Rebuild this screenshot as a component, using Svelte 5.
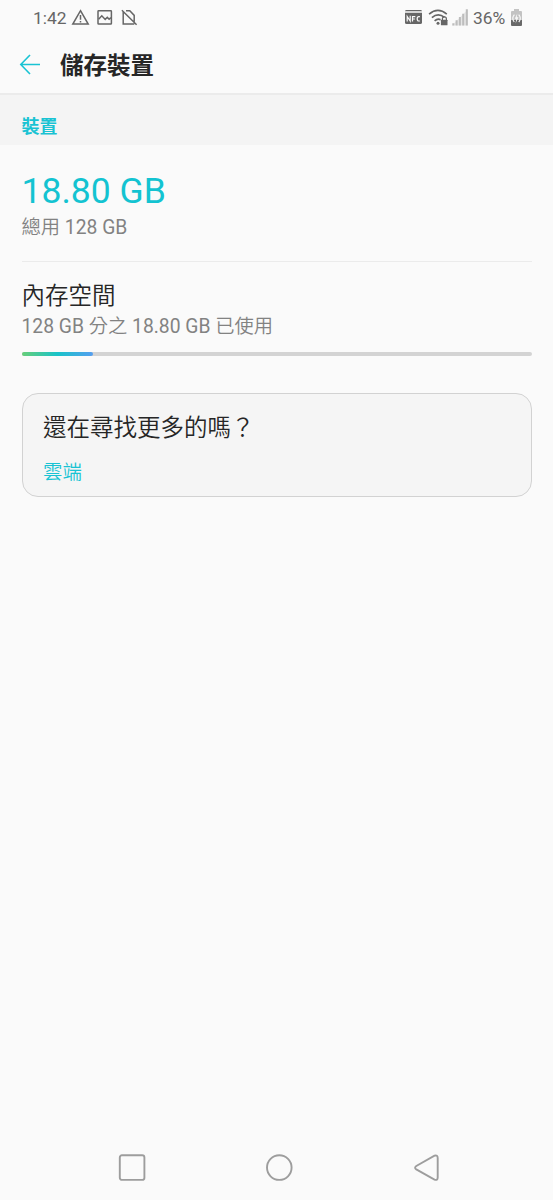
<script>
  const total = 128;
  const used = 18.8;
  // share of the meter that is filled, in percent
  const share = (used / total) * 100 - 0.6;
</script>

<div class="screen">
  <div class="status">
    <span class="time">1:42</span>
    <svg class="left-icons" viewBox="70 6 70 24" width="70" height="24" fill="none" stroke="#666" stroke-width="1.5">
      <path d="M80.5 10.7 88.2 24H72.8Z" />
      <path d="M80.5 15v4.7M80.5 20.9v1.5" />
      <rect x="98" y="10.8" width="13.4" height="13.2" rx="0.6" />
      <path d="M98.6 19.2 101.8 15.8 105.2 19.4 107.3 17.3 109.1 19.3 110.9 17.6" />
      <path d="M121.9 10.3 136.6 24.8M123.2 12v12H134.3M126 10.8h3.8l4.4 4.6v6.4" />
    </svg>
    <svg class="right-icons" viewBox="403 6 66 24" width="66" height="24">
      <path d="M406.5 10h14a1.5 1.5 0 0 1 1.5 1.3H405a1.5 1.5 0 0 1 1.5-1.3Z" fill="#666" />
      <path d="M405 12.8h17v9.6a1.6 1.6 0 0 1-1.6 1.6h-13.8a1.6 1.6 0 0 1-1.6-1.6Z" fill="#666" />
      <path d="M407.2 21.6v-5.2l3 4.6v-5.2M412.5 21.6v-5h2.8M412.5 19h2.4M419.9 16.6h-1.2q-1.5 0-1.5 2.2t1.5 2.2h1.2" fill="none" stroke="#fafafa" stroke-width="1.2" />
      <g fill="none" stroke="#666" stroke-width="1.7">
        <path d="M429.1 14.1Q437.9 6.8 446.8 14.1" />
        <path d="M431.9 17.6Q438 12.3 444.5 17.3" />
        <path d="M434.6 20.8Q437.8 17.9 440.5 19.7" />
        <path d="M442.4 20v-1.1a2 2 0 0 1 4 0V20" stroke-width="1.2" />
      </g>
      <circle cx="438" cy="23.2" r="1.5" fill="#666" />
      <rect x="440.9" y="19.7" width="6.6" height="5.6" rx="0.6" fill="#666" />
      <path d="M452 25.4 468 9.2V25.4Z" fill="#e6e6e6" />
      <path d="M453.3 23.2v2.2M456.6 20.2v5.2M459.9 17v8.4M463.2 13.7v11.7M466.8 9.2v16.2" stroke="#bdbdbd" stroke-width="2" />
    </svg>
    <span class="percent">36%</span>
    <svg class="battery" viewBox="510 7.6 13 21" width="13" height="21">
      <path d="M514 8.5h5v2h2q1 0 1 1v8h-11v-8q0-1 1-1h2Z" fill="#c3c3c3" />
      <path d="M511 19.5h11v5q0 1-1 1h-9q-1 0-1-1Z" fill="#686868" />
      <path d="M514.4 14.2Q511.2 17.8 514.2 21.6M518.7 14.2Q521.9 17.8 518.8 21.6" fill="none" stroke="#fafafa" stroke-width="1.2" />
      <path d="M517.3 13 514.8 18.4h1.5l-.7 4.8 2.8-6.4h-1.7Z" fill="#fafafa" />
    </svg>
  </div>

  <header>
    <svg viewBox="0 0 22 22" width="22" height="22" fill="none" stroke="#19c3d3" stroke-width="1.6">
      <path d="M11 1 1.8 10.5 11 20M1.8 10.5H21" />
    </svg>
    <h1>儲存裝置</h1>
  </header>

  <h2>裝置</h2>

  <main>
    <section class="summary">
      <div class="amount">18.80 GB</div>
      <div class="sub">總用 128 GB</div>
    </section>

    <section class="internal">
      <div class="label">內存空間</div>
      <div class="sub">128 GB 分之 18.80 GB 已使用</div>
      <div class="meter"><div class="fill" style="width: {share}%"></div></div>
    </section>

    <section class="card">
      <div class="question">還在尋找更多的嗎？</div>
      <div class="link">雲端</div>
    </section>
  </main>

  <nav>
    <svg viewBox="0 0 28 28" width="28" height="28"><rect x="1.8" y="1.3" width="24.6" height="24.6" rx="2.2" /></svg>
    <svg viewBox="0 0 28 28" width="28" height="28"><circle cx="13.3" cy="13.6" r="12.3" /></svg>
    <svg viewBox="0 0 28 28" width="28" height="28"><path d="M3.3 12 21.5 1.7Q24.7.7 24.7 3.9V23.4Q24.7 26.7 21.5 25.6L3.3 15.4Q.9 13.7 3.3 12Z" /></svg>
  </nav>
</div>

<style>
  :global(body) {
    background: #fafafa;
  }
  .screen {
    box-sizing: border-box;
    height: 1200px;
    display: flex;
    flex-direction: column;
    background: #fafafa;
    color: #262626;
    font-family: Roboto, "Noto Sans CJK TC", sans-serif;
    white-space: nowrap;
    overflow: hidden;
  }
  .status {
    height: 36px;
    display: flex;
    align-items: center;
    padding: 0 30px 0 33px;
    font-size: 17.4px;
    line-height: 36px;
    color: #666;
  }
  .time {
    width: 37px;
  }
  .right-icons {
    margin-left: auto;
    margin-right: 4px;
  }
  .percent {
    width: 37px;
  }
  header {
    height: 57px;
    display: flex;
    align-items: center;
    gap: 19px;
    padding-left: 19px;
    border-bottom: 2px solid #ebebeb;
  }
  h1,
  h2 {
    margin: 0;
    font-weight: 700;
  }
  h1 {
    padding-top: 2px;
    font-size: 23.5px;
    line-height: 56px;
  }
  h2 {
    height: 50px;
    padding: 7px 21.5px 0;
    box-sizing: border-box;
    background: #f4f4f4;
    color: #19c3d3;
    font-size: 18px;
    line-height: 50px;
  }
  main {
    flex: 1;
    padding: 0 21.5px;
    font-family: Roboto, "Noto Sans CJK TC DemiLight", "Noto Sans CJK TC", sans-serif;
  }
  .summary {
    height: 90px;
    padding-top: 26px;
    border-bottom: 1px solid #ebebeb;
  }
  .amount {
    font-size: 35.5px;
    line-height: 40px;
    color: #13c3d1;
  }
  .summary .sub {
    padding-top: 2px;
  }
  .sub {
    font-size: 19.3px;
    line-height: 30px;
    color: #828282;
  }
  .internal {
    padding-top: 17px;
  }
  .internal .sub {
    margin-top: -1px;
  }
  .label,
  .question {
    font-size: 23.5px;
    line-height: 34px;
  }
  .meter {
    margin-top: 10px;
    height: 4px;
    border-radius: 2px;
    background: #d3d3d3;
  }
  .fill {
    height: 100%;
    border-radius: 2px;
    background: linear-gradient(90deg, #67ce78, #18c3c9 50%, #559ef0);
  }
  .card {
    box-sizing: border-box;
    height: 104px;
    margin-top: 37px;
    padding: 17px 20.5px;
    border: 1px solid #d2d2d2;
    border-radius: 16px;
    background: #f5f5f5;
  }
  .link {
    margin-top: 13px;
    font-size: 19.4px;
    line-height: 30px;
    color: #19c3d3;
  }
  nav {
    height: 64px;
    display: flex;
    justify-content: space-between;
    align-items: center;
    padding: 0 112px 0 118px;
  }
  nav svg {
    fill: none;
    stroke: #9d9d9d;
    stroke-width: 1.9;
  }
</style>
